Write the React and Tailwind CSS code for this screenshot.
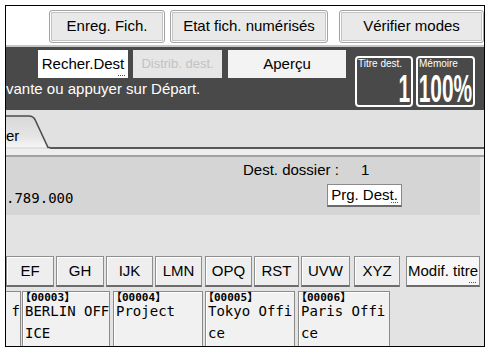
import React from "react";

// alphabet index buttons along the bottom row
const letterKeys = [
  { label: "EF", cls: "ml-0 w-[48px]" },
  { label: "GH", cls: "ml-[2px] w-[48px]" },
  { label: "IJK", cls: "ml-[2px] w-[47px]" },
  { label: "LMN", cls: "ml-[2px] w-[47px]" },
  { label: "OPQ", cls: "ml-[3px] w-[47px]" },
  { label: "RST", cls: "ml-[2px] w-[45px]" },
  { label: "UVW", cls: "ml-[2px] w-[49px]" },
  { label: "XYZ", cls: "ml-[4px] w-[46px]" },
];

const destinations = [
  { code: "00003", lines: ["BERLIN OFF", "ICE"], cls: "ml-[1px] w-[88px]" },
  { code: "00004", lines: ["Project"], cls: "ml-[3px] w-[90px]" },
  { code: "00005", lines: ["Tokyo Offi", "ce"], cls: "ml-[2px] w-[90px]" },
  { code: "00006", lines: ["Paris Offi", "ce"], cls: "ml-[3px] w-[92px]" },
];

function MoreDots() {
  return <span className="absolute right-[3px] bottom-[2px] w-[7px] border-b border-dotted border-[#555]" />;
}

function TopButton({ children, className }) {
  return (
    <div
      className={`h-[33px] flex items-center justify-center bg-[#e9e9e9] border border-[#a4a4a4] rounded-[3px] shadow-[inset_0_0_0_1px_#ffffff,inset_0_0_0_2px_#c4c4c4] text-[15px] text-black ${className}`}
    >
      {children}
    </div>
  );
}

function CounterBox({ label, value, className }) {
  return (
    <div className={`h-[51px] border-2 border-white rounded-[4px] flex flex-col ${className}`}>
      <div className="pl-[1px] text-[10px] leading-[11px] text-white">{label}</div>
      <div className="mt-[1px] flex justify-end pr-[1px]">
        <span className="inline-block text-[38px] leading-none font-bold text-white origin-right scale-x-[0.55] whitespace-nowrap">
          {value}
        </span>
      </div>
    </div>
  );
}

function DestCard({ code, lines, className }) {
  return (
    <div className={`h-full bg-[#f1f1f1] border border-b-0 border-[#8a8a8a] shadow-[inset_1px_1px_0_#ffffff] pl-[2px] ${className}`}>
      <div className="h-[8px] text-[11px] leading-[8px] font-bold font-['Noto_Sans_CJK_JP','DejaVu_Sans_Mono',monospace] whitespace-nowrap">
        <span className="-ml-[5px]">【</span>
        <span className="font-['DejaVu_Sans_Mono',monospace]">{code}</span>
        <span>】</span>
      </div>
      <div className="text-[14px] leading-[22px] font-['DejaVu_Sans_Mono',monospace] text-black whitespace-pre">
        {lines.join("\n")}
      </div>
    </div>
  );
}

export default function App() {
  return (
    <div className="w-[490px] h-[348px] bg-white pl-[5px] pt-[5px] font-['Liberation_Sans',Arial,sans-serif] text-black">
      <div className="w-[480px] h-[342px] border border-black flex flex-col overflow-hidden">
        {/* top function keys */}
        <div className="h-[39px] shrink-0 bg-white flex pt-[4px] pl-[43px]">
          <TopButton className="w-[116px]">Enreg. Fich.</TopButton>
          <TopButton className="ml-[5px] w-[158px]">Etat fich. numérisés</TopButton>
          <TopButton className="ml-[11px] w-[145px] bg-[#e3e3e3] border-[#7e7e7e]">Vérifier modes</TopButton>
        </div>
        <div className="h-[2px] shrink-0 bg-[#c6c6c6]" />

        {/* dark message bar */}
        <div className="h-[63px] shrink-0 bg-[#494949] flex">
          <div className="w-[340px] flex flex-col">
            <div className="flex pl-[32px] pt-[3px]">
              <div className="relative w-[90px] h-[28px] bg-white flex items-center justify-center text-[15px]">
                Recher.Dest
                <MoreDots />
              </div>
              <div className="ml-[5px] w-[89px] h-[28px] bg-[#e6e6e6] flex items-center justify-center text-[13px] text-[#c2c2c2]">
                Distrib. dest.
              </div>
              <div className="ml-[6px] w-[118px] h-[28px] bg-[#f3f3f3] flex items-center justify-center text-[15px]">
                Aperçu
              </div>
            </div>
            <div className="mt-[2px] text-[15px] leading-[18px] text-white whitespace-nowrap">
              vante ou appuyer sur Départ.
            </div>
          </div>
          <CounterBox label="Titre dest." value="1" className="ml-[9px] mt-[9px] w-[58px]" />
          <CounterBox label="Mémoire" value="100%" className="ml-[3px] mt-[9px] w-[59px]" />
        </div>

        {/* tab strip */}
        <div className="h-[39px] shrink-0 bg-[#e1e1e1] flex">
          <div className="relative w-[44px] h-full">
            <svg className="absolute inset-0" width="44" height="39" viewBox="0 0 44 39">
              <defs>
                <linearGradient id="tabfill" x1="0" y1="0" x2="0" y2="1">
                  <stop offset="0" stopColor="#d8d8d8" />
                  <stop offset="0.7" stopColor="#e6e6e6" />
                  <stop offset="1" stopColor="#f6f6f6" />
                </linearGradient>
              </defs>
              <path d="M0 6 L23 6 Q27 6 29 9.5 L42 37 L0 37 Z" fill="url(#tabfill)" />
              <path d="M0 6 L23 6 Q27 6 29 9.5 L42 37.5 L44 37.5" fill="none" stroke="#4c4c4c" strokeWidth="1.6" />
            </svg>
            <div className="relative pt-[17px] text-[15px] leading-[18px]">er</div>
          </div>
          <div className="flex-1 h-full border-b-2 border-[#585858]" />
        </div>
        <div className="h-[6px] shrink-0 bg-[#eeeeee]" />
        <div className="h-[2px] shrink-0 bg-[#a2a2a2]" />

        {/* lower area */}
        <div className="flex-1 bg-[#e3e3e3] flex flex-col">
          <div className="h-[58px] shrink-0 mr-[4px] bg-[#d5d5d5] flex flex-col">
            <div className="h-[27px] flex pt-[4px] pl-[237px] text-[15px] leading-[18px]">
              <span>Dest. dossier :</span>
              <span className="ml-[22px]">1</span>
            </div>
            <div className="flex">
              <div className="w-[321px] mt-[5px] text-[14px] leading-[18px] font-['DejaVu_Sans_Mono',monospace]">.789.000</div>
              <div className="relative w-[75px] h-[23px] bg-white border border-[#8a8a8a] border-b-2 border-b-[#6a6a6a] flex items-center justify-center text-[15px]">
                Prg. Dest.
                <MoreDots />
              </div>
            </div>
          </div>

          <div className="h-[41px] shrink-0" />

          {/* index keys */}
          <div className="h-[31px] shrink-0 flex">
            {letterKeys.map((k) => (
              <div
                key={k.label}
                className={`h-full bg-[#eeeeee] border border-[#8e8e8e] border-b-2 border-b-[#6c6c6c] shadow-[inset_1px_1px_0_#ffffff] flex items-center justify-center text-[15px] ${k.cls}`}
              >
                {k.label}
              </div>
            ))}
            <div className="relative ml-[6px] w-[74px] h-full bg-[#f7f7f7] border border-[#8e8e8e] border-b-2 border-b-[#6c6c6c] flex items-center justify-center text-[15px]">
              Modif. titre
              <MoreDots />
            </div>
          </div>

          {/* destination keys */}
          <div className="mt-[4px] h-[55px] shrink-0 flex">
            <div className="h-full w-[15px] bg-[#f1f1f1] border border-l-0 border-b-0 border-[#8a8a8a] flex flex-col items-end">
              <div className="h-[8px]" />
              <div className="text-[14px] leading-[22px] font-['DejaVu_Sans_Mono',monospace]">f</div>
            </div>
            {destinations.map((d) => (
              <DestCard key={d.code} code={d.code} lines={d.lines} className={d.cls} />
            ))}
          </div>
        </div>
      </div>
    </div>
  );
}
